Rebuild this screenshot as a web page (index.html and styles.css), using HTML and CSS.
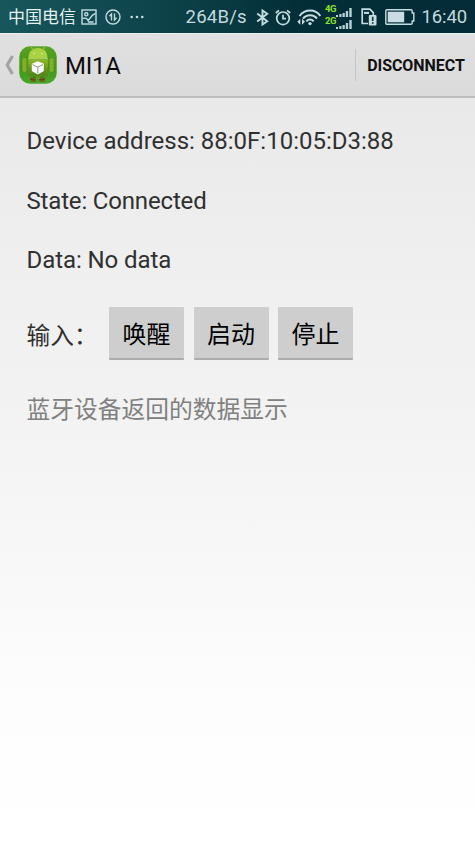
FILE: index.html
```html
<!DOCTYPE html>
<html lang="zh-CN">
<head>
<meta charset="utf-8">
<title>MI1A</title>
<link rel="stylesheet" href="styles.css">
</head>
<body>
<header class="status">
  <div class="status-left">
    <span class="carrier">中国电信</span>
    <svg class="ico-picture" width="16" height="16" viewBox="0 0 16 16" fill="none" stroke="#c3dde0" stroke-width="1.400"><rect x="1" y="1" width="14" height="14"/><circle cx="5.300" cy="5.300" r="1.600"/><path d="M1.500 9.500C4 8.500 6.500 9.500 7 11.500 9 10.500 9.500 6 14.500 4.500M7 13h5.500"/></svg>
    <svg class="ico-data" width="16" height="16" viewBox="0 0 16 16" fill="none" stroke="#c3dde0" stroke-width="1.400"><circle cx="8" cy="8" r="7"/><path d="M6.500 11.500V5L4.500 7.300M9.500 4.500V11l2-2.300"/></svg>
    <svg width="14" height="4" viewBox="0 0 14 4" fill="#c3dde0"><circle cx="1.700" cy="2" r="1.300"/><circle cx="7" cy="2" r="1.300"/><circle cx="12.300" cy="2" r="1.300"/></svg>
  </div>
  <div class="status-right">
    <span class="speed">264B/s</span>
    <svg class="ico-bt" width="13" height="17" viewBox="0 0 13 17" fill="none" stroke="#c3dde0" stroke-width="1.900"><path d="M1.200 4.500l10 7.800L6.500 15.500V1.500l4.700 3.200-10 7.800"/></svg>
    <svg class="ico-alarm" width="16" height="17" viewBox="0 0 16 17" fill="none" stroke="#c3dde0" stroke-width="1.700"><circle cx="8" cy="9.300" r="6.300"/><path d="M8 5.800V9.700h3M.8 4L4 1.300M15.200 4L12 1.300"/></svg>
    <svg class="ico-wifi" width="24" height="17" viewBox="0 0 24 17" fill="none" stroke="#c3dde0" stroke-width="2"><path d="M2.500 7C8 -.2 18.500-.2 23.300 7M6 9.700c3.500-4.500 10.600-4.500 14 0M9.300 12.300c2-2.300 5.400-2.300 7.400 0"/><circle cx="13" cy="14.600" r="1.700" fill="#c3dde0" stroke="none"/><path d="M3.300 9.700v6L.3 12.700zM5 9.700v6l3-3z" fill="#c3dde0" stroke="none"/></svg>
    <div class="cell">
      <div class="cell-row"><span>4G</span><svg width="16" height="9" viewBox="0 0 16 9" fill="#b7d3d8"><path d="M0 7h2v2H0zM3.300 6h2.200v3H3.300zM6.500 5h2.300v4H6.500zM9.800 3h2.300v6H9.800zM13.300 0h2.400v9h-2.400z"/></svg></div>
      <div class="cell-row"><span>2G</span><svg width="16" height="9" viewBox="0 0 16 9" fill="#b7d3d8"><path d="M0 7h2v2H0zM3.300 6h2.200v3H3.300zM6.500 5h2.300v4H6.500zM9.800 3h2.300v6H9.800zM13.300 0h2.400v9h-2.400z"/></svg></div>
    </div>
    <svg class="ico-sim" width="16" height="18" viewBox="0 0 16 18"><path d="M7 15.500H1.200V1.200h7.600l3.500 3.500V7" fill="none" stroke="#c3dde0" stroke-width="1.700"/><path d="M3 3.800h5v2.200H3z" fill="#b9d3d7"/><rect x="7.800" y="7" width="7.700" height="10.500" rx="1" fill="#c9dde0"/><path d="M10.900 8.700h1.600v4.300h-1.600zM10.900 14.200h1.600v1.600h-1.600z" fill="#063239"/></svg>
    <svg class="ico-battery" width="31" height="16" viewBox="0 0 31 16"><path d="M2 .8h24q1.200 0 1.200 1.200v2h1.600v8h-1.600v2q0 1.200-1.200 1.200H2q-1.200 0-1.200-1.200V2Q.8.800 2 .8z" fill="none" stroke="#c3dde0" stroke-width="1.400"/><rect x="2.700" y="2.700" width="16.500" height="10.600" fill="#cbdbe3"/></svg>
    <span class="clock">16:40</span>
  </div>
</header>
<nav class="bar">
  <svg class="back" width="9" height="20" viewBox="0 0 9 20" fill="none" stroke="#a3a3a3" stroke-width="3.200"><path d="M7.500 1L2.200 10l5.300 9"/></svg>
  <svg class="logo" width="38" height="38" viewBox="0 0 38 38">
    <defs><linearGradient id="g" x1="0" y1="0" x2="0" y2="1"><stop offset="0" stop-color="#57a526"/><stop offset=".55" stop-color="#459218"/><stop offset="1" stop-color="#48a82c"/></linearGradient>
    <linearGradient id="b" x1="0" y1="0" x2="0" y2="1"><stop offset="0" stop-color="#8fb82b"/><stop offset=".6" stop-color="#668f1c"/><stop offset="1" stop-color="#4e8a1a"/></linearGradient></defs>
    <rect x=".3" y=".3" width="37.400" height="37.400" rx="10.500" fill="url(#g)"/>
    <path d="M9.500 12.500C9.500 5.500 13 2 19 2s9.500 3.500 9.500 10.500z" fill="#a9d340"/>
    <path d="M12 1l2.500 3M26 1l-2.500 3" stroke="#8fc036" stroke-width="1.200"/>
    <circle cx="15" cy="7.500" r=".8" fill="#dff0a8"/><circle cx="23" cy="7.500" r=".8" fill="#dff0a8"/>
    <path d="M9 12.900h20" stroke="#c3de74" stroke-width="1"/>
    <rect x="9" y="13.800" width="20" height="17" rx="2" fill="url(#b)"/>
    <rect x="3.300" y="12" width="4.200" height="14" rx="2" fill="#82ae2b"/><rect x="30.500" y="12" width="4.200" height="14" rx="2" fill="#82ae2b"/>
    <path d="M12 31h5v5h-5zM21 31h5v5h-5z" fill="#66751b"/>
    <path d="M11 33l5 1M20 34l6-1" stroke="#733d20" stroke-width="1.500"/>
    <path d="M18.800 15.300l6 2.400v7.300l-6 3.500-6-3.500v-7.300z" fill="#fff"/>
    <path d="M13.500 18.500l5.300 2.700 5.300-2.700M18.800 21.200v6.300" fill="none" stroke="#87977a" stroke-width="1"/>
  </svg>
  <h1 class="title">MI1A</h1>
  <button class="action">DISCONNECT</button>
</nav>
<main class="content">
  <p class="line address">Device address: 88:0F:10:05:D3:88</p>
  <p class="line state">State: Connected</p>
  <p class="line data">Data: No data</p>
  <div class="inputs">
    <span class="label">输入：</span>
    <button class="btn">唤醒</button>
    <button class="btn">启动</button>
    <button class="btn">停止</button>
  </div>
  <p class="hint">蓝牙设备返回的数据显示</p>
</main>
</body>
</html>
```
FILE: styles.css
```css
* { box-sizing: border-box; }
body {
  margin: 0;
  height: 845px;
  overflow: hidden;
  display: flex;
  flex-direction: column;
  font-family: Roboto, "Noto Sans CJK SC", sans-serif;
  color: #303030;
  background: linear-gradient(#e9e9e9 97px, #efefef 260px, #f3f3f3 430px, #fdfdfd 700px, #fff);
}
svg { display: block; flex: none; }
p, h1 { margin: 0; font-weight: 400; white-space: nowrap; }
button { font-family: inherit; border: 0; padding: 0; margin: 0; white-space: nowrap; }

.status {
  height: 33px;
  flex: none;
  display: flex;
  justify-content: space-between;
  align-items: center;
  padding: 1px 8px 0;
  color: #c3dade;
  background: linear-gradient(90deg, #17575c, #0d4249 35%, #032d36 65%, #032c38);
}
.status-left, .status-right { display: flex; align-items: center; }
.carrier { font-size: 17px; line-height: 32px; color: #e4f1f2; }
.ico-picture { margin-left: 5px; }
.ico-data { margin: 0 9px 0 8px; }
.speed { font-size: 18.500px; letter-spacing: .25px; }
.ico-bt { margin-left: 9px; }
.ico-alarm { margin-left: 6.500px; }
.ico-wifi { margin-left: 5.500px; }
.cell { display: flex; flex-direction: column; gap: 2px; margin: -3px 0 0 4px; }
.cell-row { display: flex; align-items: flex-end; height: 10px; }
.cell-row span { width: 11px; font-size: 9.500px; font-weight: 700; line-height: 8px; color: #8be32c; align-self: flex-start; letter-spacing: -.3px; }
.cell-row svg { margin-bottom: -2px; }
.ico-sim { margin-left: 9.500px; }
.ico-battery { margin-left: 8px; }
.clock { margin-left: 5px; font-size: 18.500px; letter-spacing: -.1px; }

.bar {
  height: 65px;
  flex: none;
  display: flex;
  align-items: center;
  padding-left: 6px;
  background: linear-gradient(#e0e0e0, #dbdbdb);
  border-top: 1px solid #e9eeee;
  border-bottom: 2px solid #bcbcbc;
}
.back { margin-left: -1px; }
.logo { margin-left: 5px; }
.title { margin-left: 8px; font-size: 24px; line-height: 30px; color: #0c0c0c; padding-top: 2px; letter-spacing: -.2px; }
.action {
  margin-left: auto;
  width: 120px;
  height: 32px;
  border-left: 1px solid #c4c4c4;
  background: none;
  font-size: 16px;
  letter-spacing: -.05px;
  font-weight: 700;
  color: #111;
  padding-left: 1px;
}

.content { padding: 25px 26.500px 0; }
.line { font-size: 24px; line-height: 36px; height: 36px; }
.state { letter-spacing: -.17px; }
.data { letter-spacing: -.08px; }
.state, .data { margin-top: 23.500px; }
.inputs { display: flex; align-items: center; margin-top: 29px; height: 53px; }
.label { width: 82.500px; font-size: 23.700px; white-space: nowrap; }
.btn {
  width: 75px;
  height: 53px;
  margin-right: 9.500px;
  background: #cecece;
  border-bottom: 2px solid #acacac;
  border-radius: 1px;
  font-size: 24px;
  color: #000;
}
.hint { margin-top: 32px; font-size: 23.750px; line-height: 36px; color: #808080; }
```
